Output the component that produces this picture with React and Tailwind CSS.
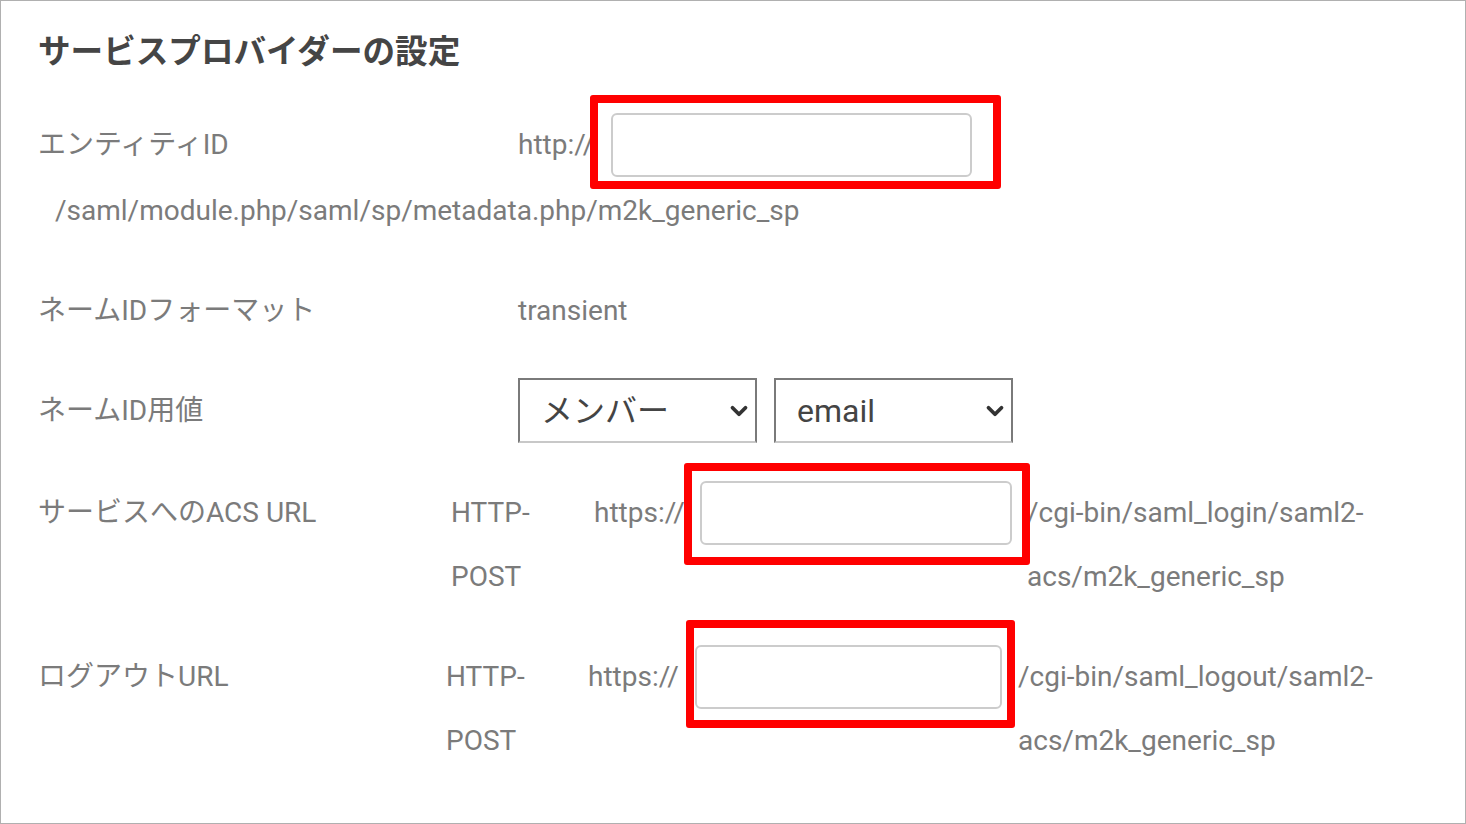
import React from 'react';
import { ChevronDown } from 'lucide-react';

const font = { fontFamily: 'Roboto, "Noto Sans CJK JP", sans-serif' };

const Marked = ({ className, boxClass }) => (
  <div className={`relative shrink-0 ${className}`}>
    <input
      type="text"
      className="block w-full h-full rounded-[6px] border-2 border-[#cccccc] bg-white outline-none"
    />
    <div className={`absolute border-[8px] border-[#ff0000] rounded-[3px] pointer-events-none ${boxClass}`} />
  </div>
);

const Select = ({ value }) => (
  <div className="relative w-[239px] h-[65px] border-2 border-[#7a7a7a] border-b-[#c8c8c8] bg-white flex items-center pl-[21px] text-[32px] text-[#444]">
    <span>{value}</span>
    <ChevronDown size={26} strokeWidth={3.5} className="absolute right-[3px] top-[18px] text-[#333]" />
  </div>
);

const SpSettings = () => {
  return (
    <div className="w-[1466px] h-[824px] border border-[#b0b0b0] bg-white px-[37px] text-[28px] text-[#7b7b7b] overflow-hidden" style={font}>
      <h2 className="mt-[31px] text-[32.6px] leading-[40px] font-bold text-[#454545]">サービスプロバイダーの設定</h2>

      {/* entity id */}
      <div className="mt-[41px] flex items-center h-[64px]">
        <div className="w-[480px]">エンティティID</div>
        <span className="w-[93px]">http://</span>
        <Marked className="w-[361px] h-[64px]" boxClass="-left-[21px] -top-[18px] w-[411px] h-[94px]" />
      </div>
      <div className="mt-[2px] pl-[17px] leading-[64px]">/saml/module.php/saml/sp/metadata.php/m2k_generic_sp</div>

      {/* name id format */}
      <div className="mt-[36px] flex items-center h-[64px]">
        <div className="w-[480px]">ネームIDフォーマット</div>
        <span>transient</span>
      </div>

      {/* name id value */}
      <div className="mt-[35px] flex items-center h-[65px]">
        <div className="w-[480px]">ネームID用値</div>
        <div className="flex gap-[17px]">
          <Select value="メンバー" />
          <Select value="email" />
        </div>
      </div>

      {/* acs url */}
      <div className="mt-[38px] flex leading-[64px]">
        <div className="w-[413px]">サービスへのACS URL</div>
        <div className="w-[143px]">HTTP-<br />POST</div>
        <div className="w-[106px]">https://</div>
        <Marked className="w-[312px] h-[64px]" boxClass="-left-[16px] -top-[18px] w-[346px] h-[102px]" />
        <div className="ml-[15px]">/cgi-bin/saml_login/saml2-<br />acs/m2k_generic_sp</div>
      </div>

      {/* logout url */}
      <div className="mt-[36px] flex leading-[64px]">
        <div className="w-[408px]">ログアウトURL</div>
        <div className="w-[142px]">HTTP-<br />POST</div>
        <div className="w-[107px]">https://</div>
        <Marked className="w-[307px] h-[64px]" boxClass="-left-[9px] -top-[25px] w-[329px] h-[108px]" />
        <div className="ml-[16px]">/cgi-bin/saml_logout/saml2-<br />acs/m2k_generic_sp</div>
      </div>
    </div>
  );
};

export default function App() {
  return <SpSettings />;
}
